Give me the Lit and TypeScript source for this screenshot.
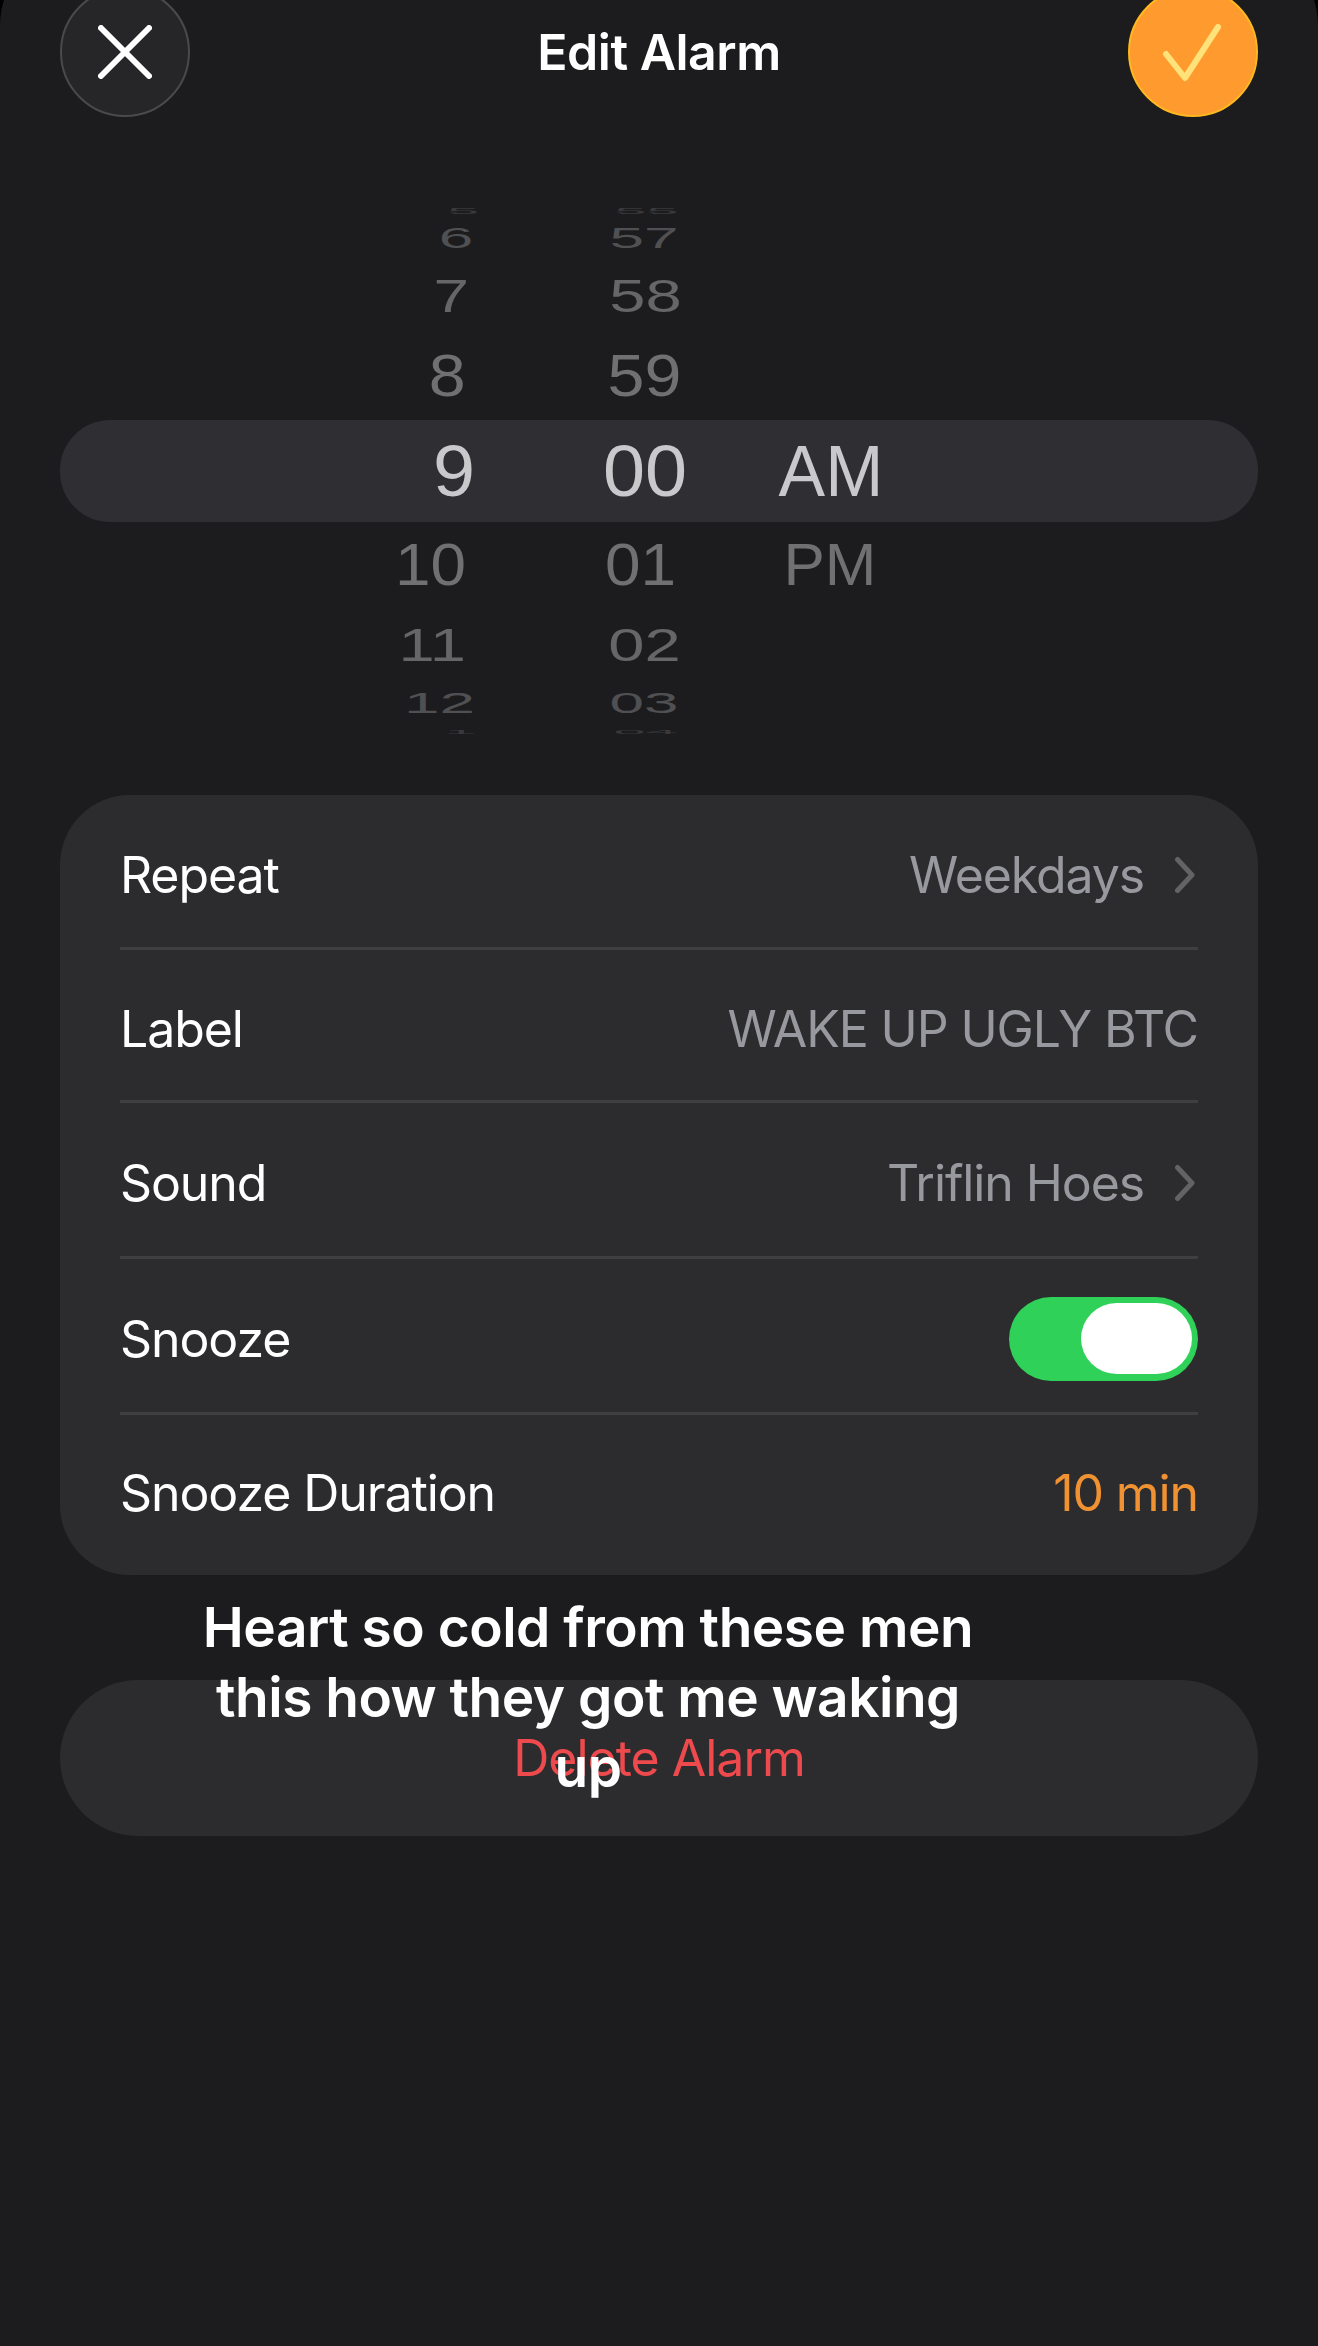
import { LitElement, html, css, svg } from "lit";
import { customElement } from "lit/decorators.js";

interface Cell { t: string; dx: number; sx: number; sy: number; c: string; }
interface PickRow { h: number; sel?: boolean; cells: (Cell | null)[]; }

const rows: PickRow[] = [
  { h: 10, cells: [{ t: "5", dx: 18, sx: 0.93, sy: 0.15, c: "#39393b" }, { t: "55", dx: 1, sx: 0.93, sy: 0.15, c: "#39393b" }, null] },
  { h: 44, cells: [{ t: "6", dx: 11, sx: 1, sy: 0.49, c: "#505052" }, { t: "57", dx: -1, sx: 1, sy: 0.49, c: "#505052" }, null] },
  { h: 72, cells: [{ t: "7", dx: 6, sx: 1.03, sy: 0.74, c: "#666668" }, { t: "58", dx: 0, sx: 1.05, sy: 0.74, c: "#666668" }, null] },
  { h: 88, cells: [{ t: "8", dx: 2, sx: 1.07, sy: 0.94, c: "#707072" }, { t: "59", dx: -1, sx: 1.07, sy: 0.94, c: "#707072" }, null] },
  { h: 102, sel: true, cells: [{ t: "9", dx: 9, sx: 1.05, sy: 1, c: "#c9c9cc" }, { t: "00", dx: 0, sx: 1.05, sy: 1, c: "#c9c9cc" }, { t: "AM", dx: 1, sx: 0.97, sy: 1, c: "#c9c9cc" }] },
  { h: 86, cells: [{ t: "10", dx: -15, sx: 1.03, sy: 0.94, c: "#707072" }, { t: "01", dx: -5, sx: 1.03, sy: 0.94, c: "#707072" }, { t: "PM", dx: 0, sx: 1, sy: 0.94, c: "#707072" }] },
  { h: 74, cells: [{ t: "11", dx: -13, sx: 1.05, sy: 0.74, c: "#666668" }, { t: "02", dx: -1, sx: 1.05, sy: 0.74, c: "#666668" }, null] },
  { h: 42, cells: [{ t: "12", dx: -6, sx: 1.03, sy: 0.47, c: "#505052" }, { t: "03", dx: -1, sx: 1, sy: 0.47, c: "#505052" }, null] },
  { h: 16, cells: [{ t: "1", dx: 15, sx: 0.93, sy: 0.1, c: "#39393b" }, { t: "04", dx: 0, sx: 0.93, sy: 0.1, c: "#39393b" }, null] },
];

const chevron = svg`<svg class="chev" viewBox="0 0 22 38" width="22" height="38"><path d="M3.5 3.5 L18 19 L3.5 34.5" fill="none" stroke="#636366" stroke-width="5" stroke-linecap="round" stroke-linejoin="round"/></svg>`;

@customElement("app-root")
export class AppRoot extends LitElement {
  static styles = css`
    :host { display: block; height: 2346px; background: #000; color: #fff; font-family: Inter, "Liberation Sans", sans-serif; overflow: hidden; position: relative; }
    .sheet { margin-top: -55px; height: 2401px; background: #1c1c1e; border-radius: 80px 80px 0 0; padding-top: 42px; box-sizing: border-box; }
    .head { display: flex; justify-content: space-between; align-items: center; padding: 0 60px; height: 130px; }
    .btn { width: 130px; height: 130px; border-radius: 50%; box-sizing: border-box; display: flex; align-items: center; justify-content: center; }
    .close { background: #262628; border: 2px solid #4a4a4d; }
    .ok { background: #ff9a2e; border: 2px solid #ffb81f; }
    .title { font-size: 50px; font-weight: 600; letter-spacing: -0.5px; color: #fff; }
    .picker { margin: 89px 60px 0; display: flex; flex-direction: column; font-family: "Liberation Sans", sans-serif; }
    .prow { display: grid; grid-template-columns: 130px 130px 100px; grid-template-rows: minmax(0, 1fr); column-gap: 70px; padding-left: 320px; font-size: 62px; }
    .prow.sel { background: #2e2e33; border-radius: 50px; font-size: 72px; }
    .cell { display: flex; justify-content: center; align-items: center; min-height: 0; white-space: nowrap; }
    .cell span { display: block; line-height: 1; flex: none; }
    .card { margin: 55px 60px 0; background: #2c2c2e; border-radius: 70px; padding: 0 60px; }
    .row { display: flex; align-items: center; justify-content: space-between; box-sizing: border-box; height: 155px; padding-top: 8px; font-size: 50px; font-weight: 400; letter-spacing: -1.1px; border-bottom: 3px solid #3f3f42; color: #fff; }
    .row:nth-child(2) { height: 153px; }
    .row:nth-child(3), .row:nth-child(4) { height: 156px; padding-top: 6px; }
    .row.last { border-bottom: 0; height: 160px; padding-top: 0; padding-bottom: 5px; }
    .val { display: flex; align-items: center; gap: 30px; color: #98989f; }
    .orange { color: #f09232; }
    .toggle { width: 189px; height: 84px; border-radius: 42px; background: #30d158; display: flex; justify-content: flex-end; align-items: center; padding: 0 6px; box-sizing: border-box; }
    .thumb { width: 111px; height: 71px; border-radius: 36px; background: #fff; }
    .chev { display: block; margin-right: 2px; }
    .del { margin: 105px 60px 0; height: 156px; border-radius: 78px; background: #2c2c2e; display: flex; align-items: center; justify-content: center; color: #ee4a4e; font-size: 50px; font-weight: 400; letter-spacing: -1px; }
    .caption { position: absolute; left: 193px; top: 1592px; width: 790px; text-align: center; font-size: 55px; line-height: 70px; font-weight: 600; letter-spacing: -0.5px; color: #fff; }
  `;

  render() {
    return html`
      <div class="sheet">
        <div class="head">
          <div class="btn close">
            <svg viewBox="0 0 54 54" width="54" height="54"><path d="M3 3 L51 51 M51 3 L3 51" stroke="#fff" stroke-width="6" stroke-linecap="round" fill="none"/></svg>
          </div>
          <div class="title">Edit Alarm</div>
          <div class="btn ok">
            <svg viewBox="0 0 60 60" width="60" height="60"><path d="M3 32 L22 56 L55 5" stroke="#ffe27a" stroke-width="6" stroke-linecap="round" stroke-linejoin="round" fill="none"/></svg>
          </div>
        </div>
        <div class="picker">
          ${rows.map((r) => html`
            <div class="prow ${r.sel ? "sel" : ""}" style="height:${r.h}px">
              ${r.cells.map((c) => c ? html`<div class="cell"><span style="color:${c.c};transform:translateX(${c.dx}px) scale(${c.sx},${c.sy})">${c.t}</span></div>` : html`<div></div>`)}
            </div>`)}
        </div>
        <div class="card">
          <div class="row"><span>Repeat</span><span class="val">Weekdays ${chevron}</span></div>
          <div class="row"><span>Label</span><span class="val">WAKE UP UGLY BTC</span></div>
          <div class="row"><span>Sound</span><span class="val">Triflin Hoes ${chevron}</span></div>
          <div class="row"><span>Snooze</span><div class="toggle"><div class="thumb"></div></div></div>
          <div class="row last"><span>Snooze Duration</span><span class="val orange">10 min</span></div>
        </div>
        <div class="del">Delete Alarm</div>
      </div>
      <div class="caption">Heart so cold from these men this how they got me waking up</div>
    `;
  }
}
